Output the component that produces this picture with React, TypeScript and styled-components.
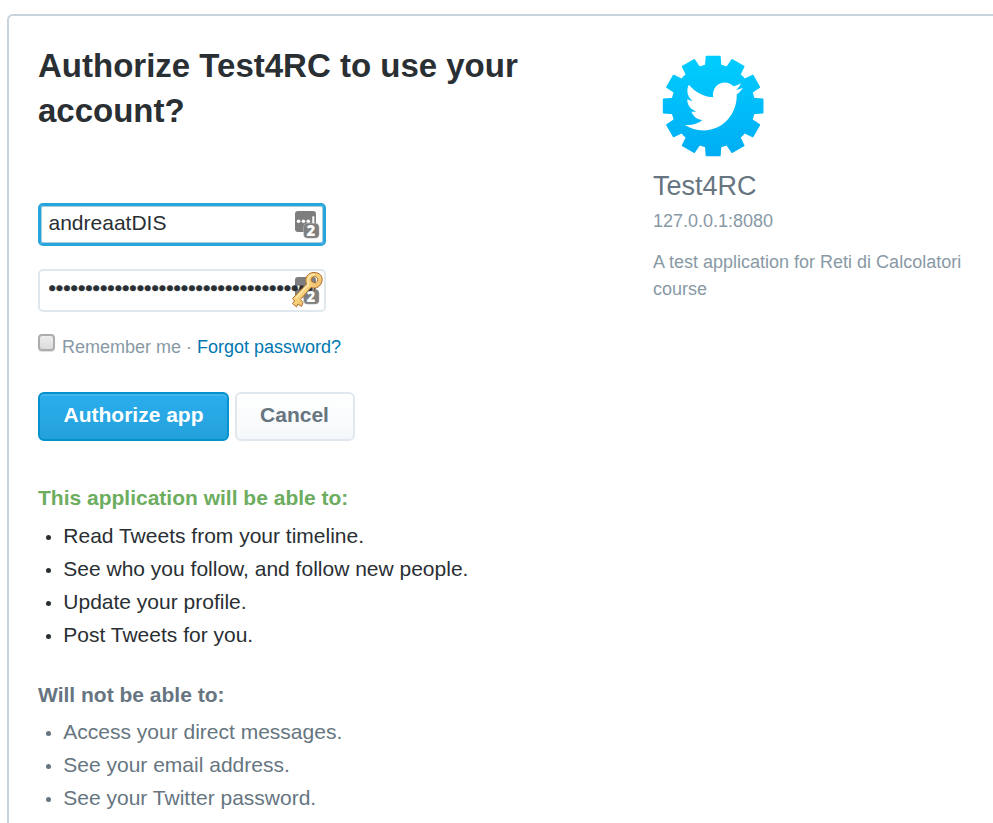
import React from 'react';
import styled, { createGlobalStyle } from 'styled-components';

const GlobalStyle = createGlobalStyle`
  html, body { margin: 0; background: #fff; overflow: hidden; }
  * { box-sizing: border-box; }
  body, input, button { font-family: "Liberation Sans", Arial, sans-serif; }
`;

const Page = styled.div`
  height: 823px;
  padding: 14px 0 0 7px;
  overflow: hidden;
`;

const Card = styled.main`
  display: flex;
  align-items: flex-start;
  width: 1020px;
  height: 840px;
  padding: 27px 29px;
  border: 2px solid #c8d3dc;
  border-radius: 6px;
  color: #292f33;
`;

const AuthColumn = styled.section`
  width: 540px;
  margin-right: 75px;
`;

const Title = styled.h1`
  height: 90px;
  margin: 0 0 70px;
  font-size: 33px;
  line-height: 45px;
`;

const Field = styled.label<{ $gap: number }>`
  display: block;
  position: relative;
  width: 288px;
  height: 43px;
  margin-bottom: ${p => p.$gap}px;
`;

const Input = styled.input<{ $active?: boolean }>`
  position: relative;
  z-index: 1;
  display: block;
  width: 288px;
  height: 43px;
  padding: 0 9px ${p => (p.$active ? 4 : 6)}px 8.5px;
  border: 2px solid ${p => (p.$active ? '#26a4dc' : '#e1e8ed')};
  border-radius: 5px;
  box-shadow: ${p => (p.$active ? 'inset 0 0 0 1px #26a4dc, inset 0 0 0 2px #a9cfdf' : 'none')};
  outline: none;
  background: transparent;
  color: #292f33;
  font-size: 21px;
  -webkit-text-stroke: ${p => (p.type === 'password' ? '0.5px #292f33' : '0')};
`;

const FieldIcon = styled.svg`
  position: absolute;
  top: 0;
  right: -2px;
  width: 40px;
  height: 42px;
`;

const KeyIcon = styled(FieldIcon)`
  z-index: 2;
`;

const RememberRow = styled.div`
  display: flex;
  height: 27px;
  margin-bottom: 31px;
  color: #8899a6;
  font-size: 18px;
  line-height: 27px;
  white-space: pre;
`;

const Checkbox = styled.input`
  appearance: none;
  width: 17px;
  height: 17px;
  margin: 0 7px 0 0;
  border: 2px solid #adadad;
  border-radius: 4px;
  background: linear-gradient(#ededed, #dcdcdc);
  box-shadow: 0 1px 1px #ddd;
`;

const Link = styled.a`
  color: #0077b1;
  text-decoration: none;
`;

const Actions = styled.div`
  display: flex;
  gap: 6px;
  margin-bottom: 42px;
`;

const Button = styled.button<{ $primary?: boolean }>`
  width: ${p => (p.$primary ? 191 : 120)}px;
  height: 49px;
  padding: 0 ${p => (p.$primary ? 0 : 1)}px 3px 0;
  border: 2px solid ${p => (p.$primary ? '#0492cf' : '#e1e8ed')};
  border-radius: 6px;
  background: ${p => (p.$primary ? 'linear-gradient(#2baeee, #24a1db)' : 'linear-gradient(#fff, #f5f8fa)')};
  box-shadow: ${p => (p.$primary ? 'inset 0 2px 0 #43b5ec' : 'none')};
  color: ${p => (p.$primary ? '#fff' : '#66757f')};
  font-size: 21px;
  font-weight: 700;
`;

const Permissions = styled.section<{ $denied?: boolean }>`
  margin-bottom: 29px;
  color: ${p => (p.$denied ? '#66757f' : '#292f33')};
  font-size: 21px;
`;

const PermissionTitle = styled.h2<{ $color: string; $gap: number }>`
  margin: 0 0 ${p => p.$gap}px;
  color: ${p => p.$color};
  font-size: 21px;
  line-height: 30px;
`;

const List = styled.ul`
  margin: 0;
  padding: 0;
  list-style: none;
`;

const ListItem = styled.li`
  display: flex;
  align-items: center;
  height: 33px;
  line-height: 33px;

  &::before {
    content: '';
    width: 5px;
    height: 5px;
    margin: 3px 12.3px 0 8px;
    border-radius: 50%;
    background: currentColor;
  }
`;

const AppInfo = styled.aside`
  width: 330px;
  color: #8899a6;
  font-size: 18px;
  line-height: 27px;
`;

const Logo = styled.svg`
  display: block;
  width: 130px;
  height: 120px;
  margin: 2px 0 6px -3px;
`;

const AppName = styled.h2`
  margin: 0 0 7px;
  color: #66757f;
  font-size: 27px;
  font-weight: 400;
  line-height: 30px;
`;

const AppUrl = styled.p`
  margin: 0 0 14px;
`;

const Description = styled.p`
  margin: 0;
`;

const teeth = Array.from({ length: 12 }, (_, i) => i * 30);
const allowed = [
  'Read Tweets from your timeline.',
  'See who you follow, and follow new people.',
  'Update your profile.',
  'Post Tweets for you.',
];
const denied = ['Access your direct messages.', 'See your email address.', 'See your Twitter password.'];

function GearBird() {
  return (
    <Logo viewBox="0 0 390 360">
      <defs>
        <linearGradient id="gear" gradientUnits="userSpaceOnUse" x1="0" y1="33" x2="0" y2="333">
          <stop stopColor="#00cdff" />
          <stop offset="1" stopColor="#00adf3" />
        </linearGradient>
      </defs>
      <mask id="gearMask" maskUnits="userSpaceOnUse" x="30" y="20" width="320" height="330">
        <g fill="#fff">
          <circle cx="189.5" cy="183" r="126" />
          {teeth.map(a => (
            <path key={a} d="M164 75L167 34Q167.500 32 170 32H209Q211.500 32 212 34L215 75Z" transform={`rotate(${a} 189.5 183)`} />
          ))}
        </g>
      </mask>
      <rect x="30" y="25" width="320" height="315" fill="url(#gear)" mask="url(#gearMask)" />
      <path
        transform="translate(105 95.6) scale(7.2 7.38)"
        fill="#fff"
        d="M23.954 4.569c-.885.389-1.83.654-2.825.775 1.014-.611 1.794-1.574 2.163-2.723-.951.555-2.005.959-3.127 1.184-.896-.959-2.173-1.559-3.591-1.559-2.717 0-4.92 2.203-4.92 4.917 0 .39.045.765.127 1.124C7.691 8.094 4.066 6.13 1.64 3.161c-.427.722-.666 1.561-.666 2.475 0 1.71.87 3.213 2.188 4.096-.807-.026-1.566-.248-2.228-.616v.061c0 2.385 1.693 4.374 3.946 4.827-.413.111-.849.171-1.296.171-.314 0-.615-.03-.916-.086.631 1.953 2.445 3.377 4.604 3.417-1.68 1.319-3.809 2.105-6.102 2.105-.39 0-.779-.023-1.17-.067 2.189 1.394 4.768 2.209 7.557 2.209 9.054 0 13.999-7.496 13.999-13.986 0-.209 0-.42-.015-.63.961-.689 1.8-1.56 2.46-2.548z"
      />
    </Logo>
  );
}

function ManagerBadge() {
  return (
    <FieldIcon viewBox="0 0 40 42">
      <rect x="7" y="8" width="21" height="21" rx="3" fill="#7e7e7e" />
      <g fill="#fff">
        <circle cx="10.5" cy="18.3" r="1.8" />
        <circle cx="15.4" cy="18.3" r="1.8" />
        <circle cx="20.3" cy="18.3" r="1.8" />
        <rect x="24.3" y="13.3" width="2" height="7.4" />
      </g>
      <rect x="15.5" y="20.2" width="15.700" height="15" rx="4" fill="#7e7e7e" stroke="#fff" strokeOpacity=".35" strokeWidth=".8" />
      <text x="22.8" y="33" textAnchor="middle" fill="#fff" fontFamily="Open Sans" fontWeight="800" fontSize="15">2</text>
    </FieldIcon>
  );
}

function GoldenKey() {
  return (
    <KeyIcon viewBox="0 0 40 42">
      <defs>
        <linearGradient id="gold" x1="0" y1="0" x2="1" y2="1">
          <stop stopColor="#f3c565" />
          <stop offset=".5" stopColor="#f8cf7a" />
          <stop offset="1" stopColor="#dd9440" />
        </linearGradient>
      </defs>
      <path
        fill="url(#gold)"
        stroke="#ad7035"
        strokeWidth="1"
        strokeLinejoin="round"
        fillRule="evenodd"
        d="M18.500 15C16 9 20 3.500 26 3.500C31.500 3.500 35 7 34 12C33 17.500 28 20.500 23 18.500L12.500 30.500L15 33.500L13.500 37.500L10 35L8.500 38L4.500 34.500L6.500 32L4.500 29.500ZM26.500 7.500A3.200 3.200 0 1 0 29.500 12A3.200 3.200 0 0 0 26.500 7.500Z"
      />
      <path d="M8 29L20.500 15.500C18.500 10 21 6 26 5.500" fill="none" stroke="#ffe9b0" strokeWidth="1.500" strokeLinecap="round" />
    </KeyIcon>
  );
}

export default function App() {
  return (
    <>
      <GlobalStyle />
      <Page>
        <Card>
          <AuthColumn>
            <Title>Authorize Test4RC to use your account?</Title>
            <Field $gap={23}>
              <ManagerBadge />
              <Input $active defaultValue="andreaatDIS" aria-label="Username" />
            </Field>
            <Field $gap={22}>
              <ManagerBadge />
              <Input type="password" defaultValue={'x'.repeat(40)} aria-label="Password" />
              <GoldenKey />
            </Field>
            <RememberRow>
              <Checkbox type="checkbox" aria-label="Remember me" />
              Remember me · <Link href="#">Forgot password?</Link>
            </RememberRow>
            <Actions>
              <Button $primary>Authorize app</Button>
              <Button>Cancel</Button>
            </Actions>
            <Permissions>
              <PermissionTitle $color="#6dad5f" $gap={6}>This application will be able to:</PermissionTitle>
              <List>{allowed.map(t => <ListItem key={t}>{t}</ListItem>)}</List>
            </Permissions>
            <Permissions $denied>
              <PermissionTitle $color="#66757f" $gap={5}>Will not be able to:</PermissionTitle>
              <List>{denied.map(t => <ListItem key={t}>{t}</ListItem>)}</List>
            </Permissions>
          </AuthColumn>
          <AppInfo>
            <GearBird />
            <AppName>Test4RC</AppName>
            <AppUrl>127.0.0.1:8080</AppUrl>
            <Description>A test application for Reti di Calcolatori course</Description>
          </AppInfo>
        </Card>
      </Page>
    </>
  );
}
